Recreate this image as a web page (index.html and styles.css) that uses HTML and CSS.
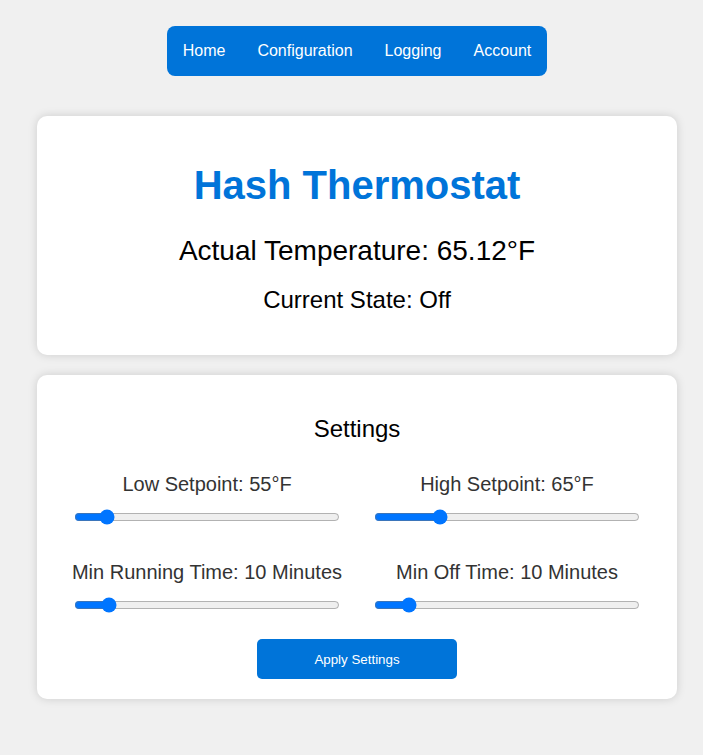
FILE: index.html
```html
<!DOCTYPE html>
<html lang="en">
<head>
<meta charset="utf-8">
<title>Hash Thermostat</title>
<link rel="stylesheet" href="styles.css">
</head>
<body>
<div class="page">
  <div class="nav-wrap">
    <nav class="nav">
      <a href="#">Home</a>
      <a href="#">Configuration</a>
      <a href="#">Logging</a>
      <a href="#">Account</a>
    </nav>
  </div>

  <section class="card status">
    <h1 class="title">Hash Thermostat</h1>
    <p class="temp">Actual Temperature: 65.12°F</p>
    <p class="state">Current State: Off</p>
  </section>

  <section class="card settings">
    <h2 class="settings-title">Settings</h2>
    <div class="grid">
      <div class="setting">
        <label class="label">Low Setpoint: 55°F</label>
        <input class="slider" type="range" min="50" max="100" value="55">
      </div>
      <div class="setting">
        <label class="label">High Setpoint: 65°F</label>
        <input class="slider" type="range" min="58" max="88" value="65">
      </div>
      <div class="setting">
        <label class="label">Min Running Time: 10 Minutes</label>
        <input class="slider" type="range" min="1" max="84" value="10">
      </div>
      <div class="setting">
        <label class="label">Min Off Time: 10 Minutes</label>
        <input class="slider" type="range" min="1" max="84" value="10">
      </div>
    </div>
    <div class="actions">
      <button class="apply" type="button">Apply Settings</button>
    </div>
  </section>
</div>
</body>
</html>
```

FILE: styles.css
```css
html, body {
  margin: 0;
  padding: 0;
}

body {
  background: #f0f0f0;
  font-family: "Liberation Sans", Arial, sans-serif;
  color: #000;
}

.page {
  padding: 26px 26px 0 37px;
}

.nav-wrap {
  display: flex;
  justify-content: center;
  margin-bottom: 40px;
}

.nav {
  display: flex;
  background: #0074d9;
  border-radius: 8px;
}

.nav a {
  display: block;
  padding: 16px;
  color: #fff;
  text-decoration: none;
  font-size: 16px;
  line-height: normal;
}

.card {
  background: #fff;
  border-radius: 10px;
  box-shadow: 0 0 10px rgba(0, 0, 0, 0.15);
  padding: 20px;
  text-align: center;
  margin-bottom: 20px;
}

.title {
  color: #0074d9;
  font-size: 40px;
  font-weight: bold;
  margin: 26.8px 0;
}

.temp {
  font-size: 28px;
  margin: 0;
}

.state {
  font-size: 24px;
  margin: 19.5px 0 21px;
}

.settings-title {
  font-size: 24px;
  font-weight: normal;
  margin: 20px 0;
}

.grid {
  display: grid;
  grid-template-columns: 1fr 1fr;
  row-gap: 15px;
}

.setting {
  padding: 10px 0;
  display: flex;
  flex-direction: column;
  align-items: center;
}

.label {
  display: block;
  font-size: 20px;
  color: #333;
  white-space: nowrap;
}

.slider {
  display: block;
  width: 266px;
  margin: 13px 0 1px;
}

.actions {
  margin-top: 15px;
}

.apply {
  width: 200px;
  height: 40px;
  background: #0074d9;
  color: #fff;
  border: none;
  border-radius: 5px;
  font-family: "Liberation Sans", Arial, sans-serif;
  font-size: 13.333px;
}
```
